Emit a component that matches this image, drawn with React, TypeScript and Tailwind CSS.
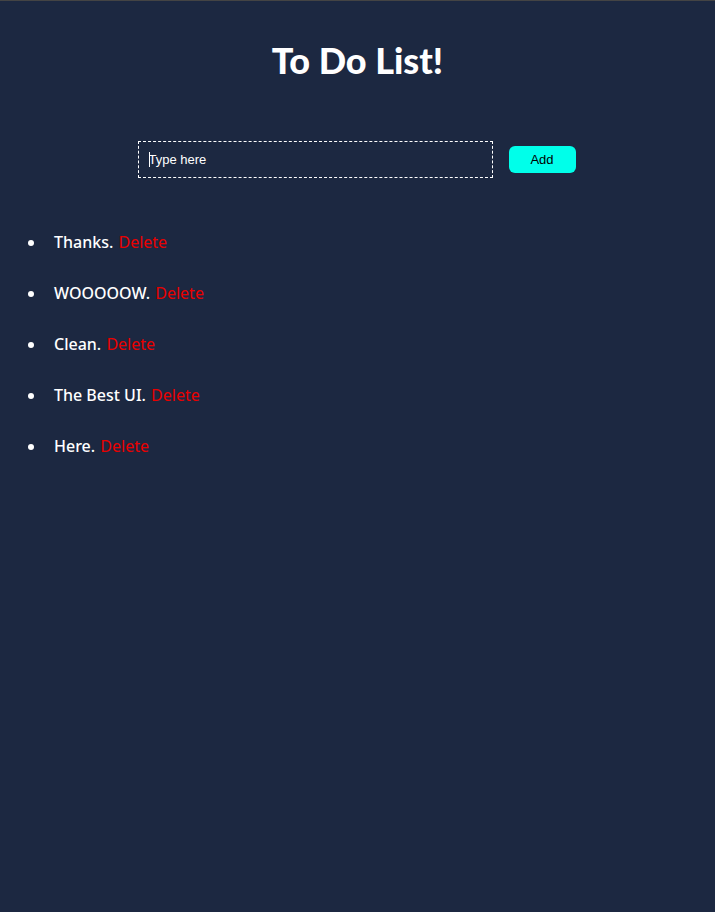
import { useState, type FormEvent } from "react";

export default function App() {
  const [items, setItems] = useState(["Thanks.", "WOOOOOW.", "Clean.", "The Best UI.", "Here."]);
  const [text, setText] = useState("");

  function add(event: FormEvent) {
    event.preventDefault();
    if (!text.trim()) return;
    setItems([...items, text.trim()]);
    setText("");
  }

  return (
    <main className="min-h-screen border-t border-[#444444] bg-[#1c2841] font-['Noto_Sans',sans-serif] text-white">
      <h1 className="pt-[35px] text-center font-['Comic_Sans_MS','Lato',sans-serif] text-4xl leading-[48px] font-black">
        To Do List!
      </h1>
      <form
        onSubmit={add}
        className="mt-[57px] flex items-center justify-center gap-4 pr-0.5 font-['Liberation_Sans',sans-serif] text-[13px]"
      >
        <div className="relative">
          <input
            aria-label="New item"
            autoFocus
            placeholder="Type here"
            value={text}
            onChange={(e) => setText(e.target.value)}
            className={`block h-[37px] w-[355px] border border-dashed border-white px-2.5 text-white outline-none placeholder:text-white ${
              text ? "caret-white" : "caret-transparent"
            }`}
          />
          {!text && <span aria-hidden="true" className="pointer-events-none absolute top-[11px] left-[11px] h-[15px] w-px bg-white" />}
        </div>
        <button type="submit" className="h-[27px] w-[67px] rounded-md bg-[#00ffea] text-black">
          Add
        </button>
      </form>
      <ul className="mt-[52px] list-disc space-y-[27px] pl-[46px] leading-6">
        {items.map((item, i) => (
          <li key={i} className="pl-2">
            <span className="font-medium">{item}</span>{" "}
            <button
              type="button"
              onClick={() => setItems(items.filter((_, n) => n !== i))}
              className="ml-px text-[#ea0000]"
            >
              Delete
            </button>
          </li>
        ))}
      </ul>
    </main>
  );
}
